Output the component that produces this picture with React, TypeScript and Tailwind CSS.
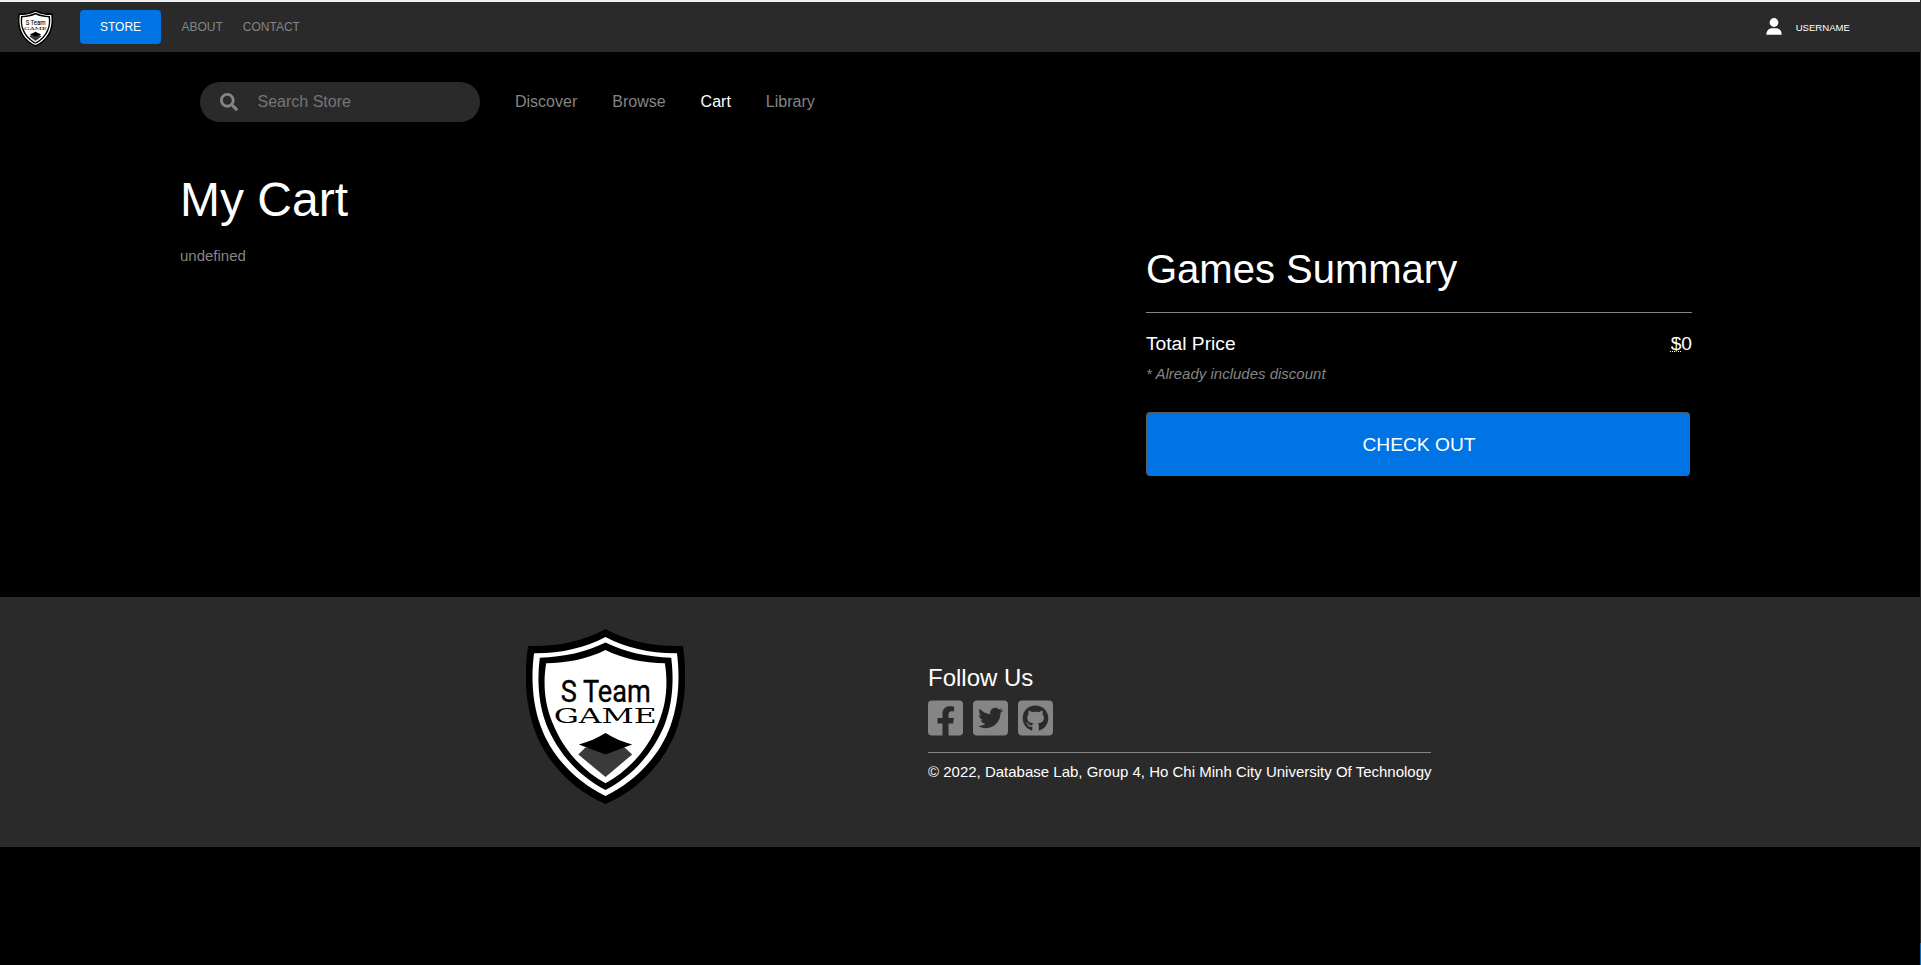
import React from "react";
import { FaFacebookSquare, FaGithubSquare, FaSearch, FaTwitterSquare } from "react-icons/fa";

function Shield({ className }: { className: string }) {
  return (
    <svg viewBox="0 0 158 176" preserveAspectRatio="none" className={className} aria-label="S Team Game">
      <path d="M79 0C58 12 30 18 2 17C-2 45 -1 72 7.500 98C18 130 44 160 79 175C114 160 140 130 150.500 98C159 72 160 45 156 17C128 18 100 12 79 0Z" fill="#000" />
      <path d="M79 8C59 19 34 24.500 8 24.200C5 48 6 73 14.500 97C25 127 50 153 79 167C108 153 133 127 143.500 97C152 73 153 48 150 24.200C124 24.500 99 19 79 8Z" fill="#fff" />
      <path d="M79 13.500C60 23 38 28 13.700 28.700C11 50 12 73 20 95C31 123 52 147 79 161C106 147 127 123 138 95C146 73 147 50 144.300 28.700C120 28 98 23 79 13.500Z" fill="#000" />
      <path d="M79 21C61 30 41 34 20 34.300C17 53 18 73 26 93C36 119 55 141 79 154.300C103 141 122 119 132 93C140 73 141 53 138 34.300C117 34 97 30 79 21Z" fill="#fff" />
      <text x="34.500" y="73.500" fontFamily="Roboto, sans-serif" fontSize="31" textLength="89.500" lengthAdjust="spacingAndGlyphs" fill="#000" stroke="#000" strokeWidth="0.4">S Team</text>
      <text x="27.500" y="94" fontFamily="'DejaVu Serif', serif" fontSize="19.500" textLength="102.500" lengthAdjust="spacingAndGlyphs" fill="#000">GAME</text>
      <path d="M59 118.500L52 125.500L79 148L105.500 125.500L98 118.500Z" fill="#3a3a3a" />
      <path d="M52.500 115.500C62 113 71 109 79 104C87 109 96 113 105.500 115.500L79 125.500Z" fill="#000" />
    </svg>
  );
}

function UserIcon() {
  return (
    <svg viewBox="0 0 16 17" className="mb-px h-[17px] w-4 fill-white">
      <circle cx="8" cy="4.500" r="4.400" />
      <path d="M.4 16.800V16C.4 12.600 3.200 10.200 6 10.200H10C12.800 10.200 15.600 12.600 15.600 16V16.800Z" />
    </svg>
  );
}

const links = ["Discover", "Browse", "Cart", "Library"];

export default function App() {
  return (
    <div className="flex h-[965px] bg-black font-['Liberation_Sans',Arial,sans-serif] text-white">
      <div className="w-[1920px] shrink-0">
        <header className="flex h-[52px] items-center border-t-2 border-[#f0f0f0] bg-[#2a2a2a] pl-[18px] text-xs">
          <Shield className="mt-0.5 h-[37px] w-[35px]" />
          <a className="ml-[27px] flex h-[34px] w-[81px] items-center justify-center rounded bg-[#0074e4]">STORE</a>
          <a className="ml-[20.5px] text-[#858585]">ABOUT</a>
          <a className="ml-5 text-[#858585]">CONTACT</a>
          <div className="mr-[70px] ml-auto flex items-center gap-[14px] text-[9.6px]">
            <UserIcon />
            <span className="pt-0.5">USERNAME</span>
          </div>
        </header>

        <main className="h-[545px] pt-[30px]">
          <nav className="flex items-center gap-[35px] pl-[200px] text-base text-[#858585]">
            <div className="flex h-10 w-[280px] items-center gap-5 rounded-full bg-[#2a2a2a] pl-5">
              <FaSearch className="size-[18px]" />
              <input className="-ml-[0.5px] w-48 outline-none placeholder:text-[#757575]" placeholder="Search Store" />
            </div>
            {links.map((l) => (
              <a key={l} className={l === "Cart" ? "text-white" : ""}>{l}</a>
            ))}
          </nav>
          <div className="flex">
            <section className="w-[1146px] pt-[51px] pl-[180px]">
              <h1 className="text-[48px] leading-[54px]">My Cart</h1>
              <p className="mt-[20px] text-[15px] leading-[17px] text-[#858585]">undefined</p>
            </section>
            <section className="w-[546px] pt-[124px]">
              <h2 className="border-b border-[#858585] pb-[20px] text-[40px] leading-[46px]">Games Summary</h2>
              <div className="mt-[20px] flex justify-between text-[19.2px] leading-[22px]">
                <span>Total Price</span>
                <span>
                  <span className="underline decoration-dotted decoration-1">$</span>0
                </span>
              </div>
              <p className="mt-[10px] text-[15px] leading-[17px] text-[#858585] italic">* Already includes discount</p>
              <button className="mt-[30px] h-16 w-[544px] rounded border-t-2 border-l-2 border-[#565c62] bg-[#0074e4] text-[19.2px]">CHECK OUT</button>
            </section>
          </div>
        </main>

        <footer className="flex h-[250px] bg-[#2a2a2a]">
          <div className="w-[928px] pt-[32px] pl-[526px]">
            <Shield className="h-[176px] w-[159px]" />
          </div>
          <div className="w-[503px] pt-[67px]">
            <h3 className="text-2xl leading-[27px]">Follow Us</h3>
            <div className="mt-[7px] flex gap-[10px] border-b border-[#858585] pb-[14px] text-[#858585]">
              <FaFacebookSquare className="h-10 w-[35px]" />
              <FaTwitterSquare className="h-10 w-[35px]" />
              <FaGithubSquare className="h-10 w-[35px]" />
            </div>
            <p className="mt-[10px] text-[15px] leading-[17px] whitespace-nowrap">© 2022, Database Lab, Group 4, Ho Chi Minh City University Of Technology</p>
          </div>
        </footer>
      </div>
      <div className="flex w-px flex-col">
        <div className="h-[943px] bg-[#2b2b2b]" />
        <div className="flex-1 bg-[#0f6cb5]" />
      </div>
    </div>
  );
}
